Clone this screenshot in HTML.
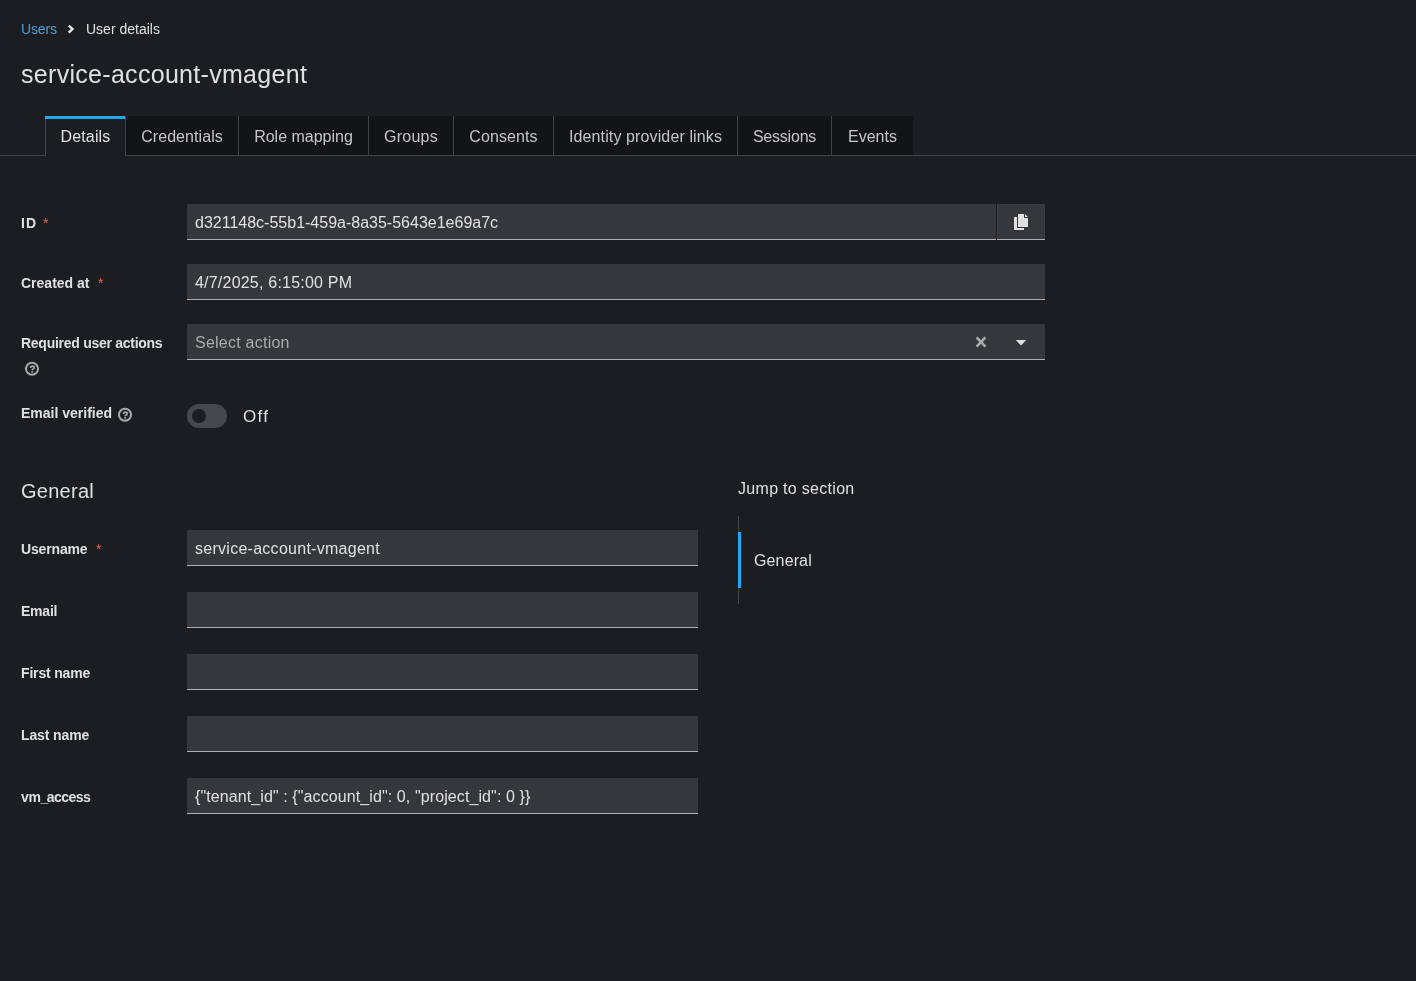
<!DOCTYPE html>
<html><head><meta charset="utf-8">
<style>
*{box-sizing:border-box;margin:0;padding:0}
html,body{-webkit-font-smoothing:antialiased;width:1416px;height:981px;overflow:hidden;background:#1b1d21;font-family:"Liberation Sans",sans-serif;color:#e0e0e0}
.abs{position:absolute;white-space:nowrap}
.bc{position:absolute;top:21px;font-size:14px;line-height:16px;white-space:nowrap}
.link{color:#4f9fdc}
.title{position:absolute;left:21px;top:59px;font-size:25px;line-height:30px;color:#e0e0e0;white-space:nowrap;letter-spacing:0.3px}
.tabline{position:absolute;left:0;top:155px;width:1416px;height:1px;background:#444548}
.tab{position:absolute;top:116px;height:40px;background:#131416;box-shadow:inset 0 -1px 0 #0e0f11;border-left:1px solid #444548;border-bottom:1px solid #444548;font-size:16px;line-height:41px;text-align:center;color:#c5c6c7;white-space:nowrap}
.tab.active{background:#1b1d21;box-shadow:none;border-bottom:none;color:#e0e0e0;line-height:42px}
.lbl{position:absolute;left:21px;font-size:14px;font-weight:bold;line-height:18px;color:#e0e0e0;white-space:nowrap}
.req{position:absolute;top:0;color:#ec6052;font-weight:normal}
.inp{position:absolute;left:187px;height:36px;background:#36373a;border-bottom:1px solid #aeb0b3;font-size:16px;line-height:35px;padding:1px 0 0 8px;color:#e0e0e0;white-space:nowrap;overflow:hidden}
.ph{color:#aaabac}
</style></head>
<body><div id="root" style="position:absolute;left:0;top:0;width:1416px;height:981px;will-change:transform">
<div class="bc link" style="left:21px;letter-spacing:-0.12px">Users</div>
<svg class="abs" style="left:67px;top:25px" width="8" height="9" viewBox="0 0 8 9"><path d="M1.7 0.5 L5.5 4.1 L1.7 7.7" stroke="#e6e6e6" stroke-width="2.4" fill="none"/></svg>
<div class="bc" style="left:86px">User details</div>
<div class="title">service-account-vmagent</div>

<div class="tabline"></div>
<div class="tab active" style="left:45px;width:80px;letter-spacing:0.15px">Details</div>
<div class="abs" style="left:45px;top:116px;width:81px;height:3px;background:#1fa7f8"></div>
<div class="tab" style="left:125px;width:113px;letter-spacing:0.07px">Credentials</div>
<div class="tab" style="left:238px;width:130px">Role mapping</div>
<div class="tab" style="left:368px;width:85px;letter-spacing:0.26px">Groups</div>
<div class="tab" style="left:453px;width:100px;letter-spacing:0.1px">Consents</div>
<div class="tab" style="left:553px;width:184px;letter-spacing:0.12px">Identity provider links</div>
<div class="tab" style="left:737px;width:94px;letter-spacing:-0.21px">Sessions</div>
<div class="tab" style="left:831px;width:82px">Events</div>

<div class="lbl" style="top:214px;letter-spacing:1px">ID<span class="req" style="left:22px">*</span></div>
<div class="inp" style="top:204px;width:809px">d321148c-55b1-459a-8a35-5643e1e69a7c</div>
<div class="inp" style="top:204px;left:997px;width:48px;padding:0;box-shadow:inset 1px 0 0 #3f4043, inset 0 1px 0 #3a3b3e, inset -1px 0 0 #3a3b3e"></div>
<svg class="abs" style="left:1014px;top:214px" width="15" height="17" viewBox="0 0 15 17"><path d="M4 0 H10 V4 H14 V13 H4 Z M11 0 L14 3 H11 Z M0 3 H3 V14 H10 V16 H0 Z" fill="#e0e0e0"/></svg>

<div class="lbl" style="top:274px">Created at<span class="req" style="left:77px">*</span></div>
<div class="inp" style="top:264px;width:858px;letter-spacing:0.21px">4/7/2025, 6:15:00 PM</div>

<div class="lbl" style="top:334px;letter-spacing:-0.27px">Required user actions</div>
<div class="inp" style="top:324px;width:858px;letter-spacing:0.24px"><span class="ph">Select action</span></div>
<svg class="abs" style="left:975px;top:336px" width="12" height="12" viewBox="0 0 12 12"><path d="M1.6 1.3 L10.4 10.7 M10.4 1.3 L1.6 10.7" stroke="#aaabac" stroke-width="2.6"/></svg>
<svg class="abs" style="left:1015px;top:340px" width="12" height="7" viewBox="0 0 12 7"><path d="M0.8 0 H11.2 L6 5.4 Z" fill="#e0e0e0"/></svg>
<svg class="abs" style="left:24px;top:361px" width="16" height="16" viewBox="0 0 16 16"><circle cx="8" cy="7.75" r="6.05" stroke="#aaabac" stroke-width="2" fill="none"/><path d="M6.5 6.9 Q6.5 5.1 8.4 5.1 Q10.2 5.1 10.2 6.7 Q10.2 7.7 9.2 8.1 Q8.2 8.5 8.2 9.3" stroke="#aaabac" stroke-width="1.6" fill="none"/><rect x="7.2" y="10.1" width="2" height="1.5" fill="#aaabac"/></svg>

<div class="lbl" style="top:404px">Email verified</div>
<svg class="abs" style="left:117px;top:407px" width="16" height="16" viewBox="0 0 16 16"><circle cx="8" cy="7.75" r="6.05" stroke="#aaabac" stroke-width="2" fill="none"/><path d="M6.5 6.9 Q6.5 5.1 8.4 5.1 Q10.2 5.1 10.2 6.7 Q10.2 7.7 9.2 8.1 Q8.2 8.5 8.2 9.3" stroke="#aaabac" stroke-width="1.6" fill="none"/><rect x="7.2" y="10.1" width="2" height="1.5" fill="#aaabac"/></svg>
<div class="abs" style="left:187px;top:404px;width:40px;height:24px;border-radius:12px;background:#46474a"></div>
<div class="abs" style="left:192px;top:409px;width:14px;height:14px;border-radius:7px;background:#1b1d21"></div>
<div class="abs" style="left:243px;top:407px;font-size:17px;line-height:20px;letter-spacing:1.3px">Off</div>

<div class="abs" style="left:21px;top:479px;font-size:20px;line-height:24px;letter-spacing:0.27px">General</div>

<div class="lbl" style="top:540px;letter-spacing:-0.16px">Username<span class="req" style="left:75px">*</span></div>
<div class="inp" style="top:530px;width:511px;letter-spacing:0.27px">service-account-vmagent</div>
<div class="lbl" style="top:602px;letter-spacing:-0.22px">Email</div>
<div class="inp" style="top:592px;width:511px"></div>
<div class="lbl" style="top:664px;letter-spacing:-0.17px">First name</div>
<div class="inp" style="top:654px;width:511px"></div>
<div class="lbl" style="top:726px;letter-spacing:-0.12px">Last name</div>
<div class="inp" style="top:716px;width:511px"></div>
<div class="lbl" style="top:788px"><span style="letter-spacing:-0.4px">vm</span><span style="letter-spacing:-1.5px">_</span><span style="letter-spacing:-0.55px">access</span></div>
<div class="inp" style="top:778px;width:511px;letter-spacing:0.1px">{"tenant_id" : {"account_id": 0, "project_id": 0 }}</div>

<div class="abs" style="left:738px;top:479px;font-size:16px;line-height:20px;letter-spacing:0.3px">Jump to section</div>
<div class="abs" style="left:738px;top:516px;width:1px;height:88px;background:#444548"></div>
<div class="abs" style="left:738px;top:532px;width:3px;height:56px;background:#1fa7f8"></div>
<div class="abs" style="left:754px;top:551px;font-size:16px;line-height:20px;letter-spacing:0.13px">General</div>
</div></body></html>
